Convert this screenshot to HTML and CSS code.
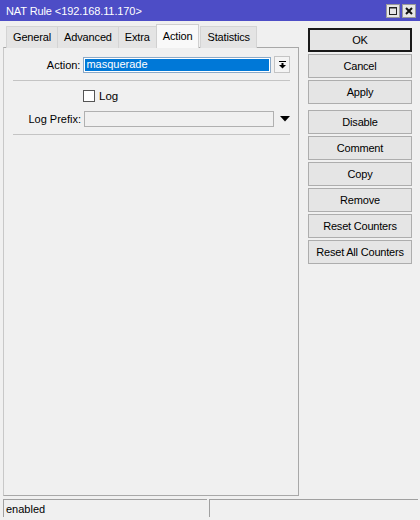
FILE: index.html
```html
<!DOCTYPE html>
<html lang="en">
<head>
	<meta charset="UTF-8">
	<title>NAT Rule</title>
	<link rel="stylesheet" href="styles.css">
</head>
<body>
	<div class="window">
		<div class="titlebar">
			<span class="title">NAT Rule &lt;192.168.11.170&gt;</span>
			<span class="tbtn">
				<svg width="10" height="10" viewBox="0 0 10 10"><rect x="1.5" y="1.5" width="7" height="7" fill="none" stroke="#222" stroke-width="1"/><line x1="1" y1="2" x2="9" y2="2" stroke="#222" stroke-width="1"/></svg>
			</span>
			<span class="tbtn">
				<svg width="10" height="10" viewBox="0 0 10 10"><path d="M2 2 L8 8 M8 2 L2 8" stroke="#111" stroke-width="2"/></svg>
			</span>
		</div>
		<div class="main">
			<div class="left">
				<ul class="tabs">
					<li>General</li>
					<li>Advanced</li>
					<li>Extra</li>
					<li class="active">Action</li>
					<li>Statistics</li>
				</ul>
				<div class="panel">
					<div class="row">
						<label>Action:</label>
						<div class="select"><span>masquerade</span></div>
						<span class="dropbtn">
							<svg width="9" height="9" viewBox="0 0 9 9"><line x1="1" y1="1.5" x2="8" y2="1.5" stroke="#000" stroke-width="1"/><rect x="3.5" y="3" width="2" height="2" fill="#000"/><path d="M1 5 L8 5 L4.5 8.5 Z" fill="#000"/></svg>
						</span>
					</div>
					<hr>
					<div class="row check">
						<span class="box"></span>
						<span>Log</span>
					</div>
					<div class="row">
						<label>Log Prefix:</label>
						<div class="input"></div>
						<span class="arrow">
							<svg width="10" height="6" viewBox="0 0 10 6"><path d="M0 0 L10 0 L5 5.5 Z" fill="#000"/></svg>
						</span>
					</div>
					<hr>
				</div>
			</div>
			<div class="buttons">
				<button class="default">OK</button>
				<button>Cancel</button>
				<button>Apply</button>
				<button class="gap">Disable</button>
				<button>Comment</button>
				<button>Copy</button>
				<button>Remove</button>
				<button>Reset Counters</button>
				<button>Reset All Counters</button>
			</div>
		</div>
		<div class="status">
			<div class="cell first">enabled</div>
			<div class="cell"></div>
		</div>
	</div>
</body>
</html>
```
FILE: styles.css
```css
*{margin:0;padding:0;box-sizing:border-box;}
body{
	background:#f0f0f0;
	font-family:"Liberation Sans", Arial, sans-serif;
	font-size:11px;
	color:#000;
}
.window{
	width:420px;
	height:520px;
	display:flex;
	flex-direction:column;
}
.titlebar{
	height:21px;
	background:#4d4dc6;
	display:flex;
	align-items:center;
	padding:0 4px 0 6px;
	gap:2px;
}
.title{
	color:#fff;
	font-size:11px;
	letter-spacing:-0.1px;
	flex:1;
}
.tbtn{
	width:14px;
	height:14px;
	background:#e6e6e6;
	border:1px solid #9a9a9a;
	display:flex;
	align-items:center;
	justify-content:center;
}
.main{
	flex:1;
	display:flex;
	padding:3px 0 0 3px;
}
.left{
	width:296px;
	display:flex;
	flex-direction:column;
}
.tabs{
	list-style:none;
	display:flex;
	align-items:flex-end;
	height:24px;
	padding-left:3px;
	position:relative;
	z-index:1;
}
.tabs li{
	height:22px;
	line-height:21px;
	padding:0 6px;
	background:#e4e4e4;
	border:1px solid #d4d4d4;
	border-bottom:none;
	margin-right:-1px;
	letter-spacing:-0.15px;
}
.tabs li.active{
	height:24px;
	line-height:22px;
	background:#f9f9f9;
	border-color:#d0d0d0;
	margin:0 1px 0 0;
	padding-bottom:2px;
}
.panel{
	flex:1;
	border:1px solid #a8a8a8;
	border-left-color:#c8c8c8;
	margin-top:-1px;
	margin-bottom:2px;
	padding:8px 8px 0 0;
}
.row{
	display:flex;
	align-items:center;
	height:17px;
}
.row label{
	width:77px;
	text-align:right;
	margin-right:3px;
}
.select{
	width:189px;
	height:16px;
	border:1px solid #8aa9c8;
	box-shadow:inset 0 0 0 1px #fff;
	background:#0078d7;
	padding:0 2px;
	display:flex;
	align-items:center;
}
.select span{
	color:#fff;
	line-height:13px;
}
.dropbtn{
	width:16px;
	height:17px;
	margin-left:3px;
	border:1px solid #c4c4c4;
	background:#f4f4f4;
	display:flex;
	align-items:center;
	justify-content:center;
}
hr{
	border:none;
	border-top:1px solid #c4c4c4;
	margin:7px 0 8px 9px;
}
.check{
	padding-left:79px;
	gap:4px;
	height:14px;
	margin:2px 0 7px;
	font-size:11.5px;
}
.box{
	width:12px;
	height:12px;
	border:1px solid #555;
	background:#fff;
}
.input{
	width:190px;
	height:16px;
	border:1px solid #b0b0b0;
	background:#f0f0f0;
}
.arrow{
	margin-left:6px;
	display:flex;
	align-items:center;
}
.buttons{
	width:104px;
	margin-left:9px;
	padding-top:4px;
	display:flex;
	flex-direction:column;
	gap:2px;
}
.buttons button{
	height:24px;
	font:inherit;
	font-size:11px;
	letter-spacing:-0.2px;
	background:#e5e5e5;
	border:1px solid #adadad;
	color:#000;
}
.buttons button.default{
	border:2px solid #1a1a1a;
}
.buttons button.gap{
	margin-top:4px;
}
.status{
	height:22px;
	display:flex;
	padding:1px 2px 3px 3px;
	gap:2px;
}
.cell{
	flex:1;
	border-top:1px solid #a0a0a0;
	border-left:1px solid #a0a0a0;
	padding:2px 2px;
	line-height:14px;
}
.cell.first{
	flex:0 0 204px;
}
```
